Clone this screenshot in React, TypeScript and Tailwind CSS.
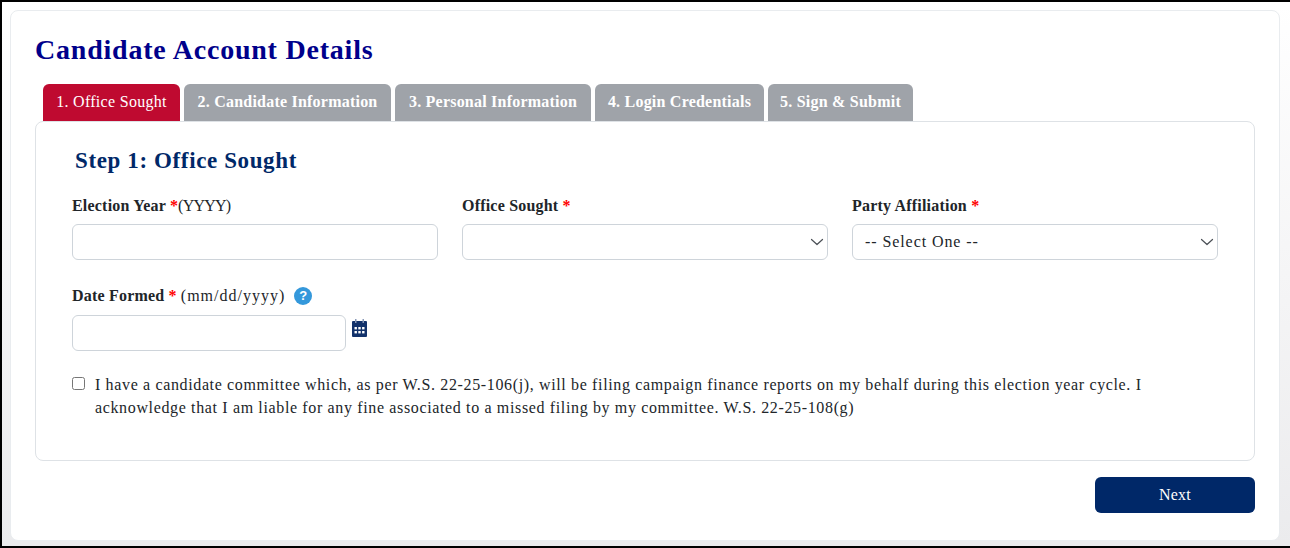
const serif = "font-['Liberation_Serif','DejaVu_Serif',serif]";
const tabs = ["2. Candidate Information", "3. Personal Information", "4. Login Credentials", "5. Sign & Submit"];
const tabWidths = ["w-[207px]", "w-[196px]", "w-[169px]", "w-[145px]"];

function Req() {
    return <span className="text-[#ff0000]">*</span>;
}

function Field({ label, select, value }: { label: React.ReactNode; select?: boolean; value?: string }) {
    return (
        <div className="w-[366px]">
            <div className="h-[20px] text-[16px] leading-[20px] font-bold text-[#212529] tracking-[0.2px]">{label}</div>
            <div className="mt-[8px] h-[36px] border border-[#ced4da] rounded-[6px] bg-white flex items-center justify-between pl-[12px] pr-[2px] text-[16px] text-[#212529] tracking-[0.92px]">
                <span>{value}</span>
                {select && (
                    <svg width="16" height="16" viewBox="0 0 16 16" fill="none" stroke="#4a4f55" strokeWidth="1.2" strokeLinecap="round" strokeLinejoin="round">
                        <path d="m2.5 5.5 5.5 5 5.5-5" />
                    </svg>
                )}
            </div>
        </div>
    );
}

export default function App() {
    return (
        <div className={`${serif} w-[1290px] h-[548px] overflow-hidden bg-linear-to-b from-white to-[#ebebed] border-t-2 border-l-2 border-b-2 border-black pt-[8px] pl-[8px] pr-[10px]`}>
            <div className="w-[1270px] h-[531px] bg-white border border-[#e9ecef] rounded-[8px] pl-[24px] pr-[25px] pt-[23px]">
                <h1 className="text-[28px] leading-[32px] font-bold text-[#00008b] tracking-[0.78px]">Candidate Account Details</h1>

                {/* Tabs */}
                <div className="flex gap-[4px] pl-[8px] mt-[18px] h-[37px]">
                    <div className="w-[137px] bg-[#bf0a30] text-white rounded-t-[6px] text-[16px] pb-[2px] flex items-center justify-center tracking-[0.3px]">1. Office Sought</div>
                    {tabs.map((t, i) => (
                        <div key={t} className={`${tabWidths[i]} bg-[#9fa3a9] text-white rounded-t-[6px] text-[16px] font-bold pb-[2px] flex items-center justify-center tracking-[0.22px]`}>{t}</div>
                    ))}
                </div>

                {/* Step panel */}
                <div className="w-[1220px] h-[340px] border border-[#dee2e6] rounded-[8px] pl-[36px] pt-[26px]">
                    <h2 className="pl-[3px] text-[23px] leading-[26px] font-bold text-[#002868] tracking-[0.62px]">Step 1: Office Sought</h2>
                    <div className="flex gap-[24px] mt-[22px]">
                        <Field label={<>Election Year <Req /><span className="font-normal tracking-[-0.8px]">(YYYY)</span></>} />
                        <Field label={<>Office Sought <Req /></>} select />
                        <Field label={<>Party Affiliation <Req /></>} select value="-- Select One --" />
                    </div>
                    <div className="mt-[26px] h-[20px] flex items-center text-[16px] text-[#212529] tracking-[0.2px]">
                        <span className="font-bold">Date Formed <Req /></span>
                        <span className="ml-[4px] tracking-[1px]">(mm/dd/yyyy)</span>
                        <span className="ml-[9px] w-[18px] h-[18px] rounded-full bg-[#3498db] text-white text-[13px] font-bold font-['Liberation_Sans',sans-serif] flex items-center justify-center">?</span>
                    </div>
                    <div className="mt-[9px] flex items-start gap-[6px]">
                        <div className="w-[274px] h-[36px] border border-[#ced4da] rounded-[6px] bg-white" />
                        <svg width="15" height="18" viewBox="0 0 15 18" className="mt-[4px]">
                            <rect x="0" y="2" width="15" height="16" rx="1" fill="#12326b" />
                            <rect x="3" y="0" width="1.5" height="4" fill="#8a9ab8" />
                            <rect x="10.5" y="0" width="1.5" height="4" fill="#8a9ab8" />
                            <g fill="#ffffff">
                                <rect x="2.5" y="8" width="2.4" height="2.4" />
                                <rect x="6.3" y="8" width="2.4" height="2.4" />
                                <rect x="10.1" y="8" width="2.4" height="2.4" />
                                <rect x="2.5" y="12" width="2.4" height="2.4" />
                                <rect x="6.3" y="12" width="2.4" height="2.4" />
                                <rect x="10.1" y="12" width="2.4" height="2.4" />
                            </g>
                        </svg>
                    </div>
                    <div className="mt-[24px] flex items-start">
                        <input type="checkbox" className="w-[13px] h-[13px] mt-[2px] shrink-0" />
                        <p className="ml-[10px] -mt-[2px] w-[1060px] text-[16px] leading-[23px] text-[#212529] tracking-[0.64px]">
                            I have a candidate committee which, as per W.S. 22-25-106(j), will be filing campaign finance reports on my behalf during this election year cycle. I acknowledge that I am liable for any fine associated to a missed filing by my committee. W.S. 22-25-108(g)
                        </p>
                    </div>
                </div>

                <div className="w-[1220px] flex justify-end mt-[16px]">
                    <button className="w-[160px] h-[36px] bg-[#002868] rounded-[6px] text-white text-[16px] tracking-[0.2px]">Next</button>
                </div>
            </div>
        </div>
    );
}
